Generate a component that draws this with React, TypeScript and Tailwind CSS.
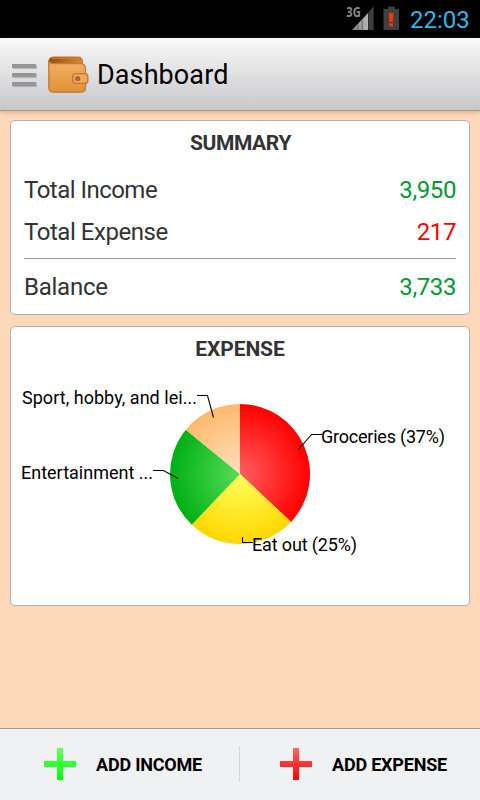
import React from "react";

const CX = 240;
const CY = 94;
const R = 70;

function slicePath(from: number, to: number): string {
  const point = (deg: number) => {
    const a = (deg * Math.PI) / 180;
    return `${(CX + R * Math.sin(a)).toFixed(2)} ${(CY - R * Math.cos(a)).toFixed(2)}`;
  };
  return `M${CX} ${CY}L${point(from)}A${R} ${R} 0 0 1 ${point(to)}Z`;
}

const slices = [
  { id: "groceries", from: 0, to: 133.2, inner: "#ff5e5e", outer: "#ff0000" },
  { id: "eatout", from: 133.2, to: 223.5, inner: "#ffff5e", outer: "#ffd700" },
  { id: "fun", from: 223.5, to: 309.3, inner: "#57dc57", outer: "#00b014" },
  { id: "sport", from: 309.3, to: 360, inner: "#ffdfbe", outer: "#ffb96e" },
];

const labels = [
  { text: "Sport, hobby, and lei...", x: 22, y: 24, width: 175, line: "197,15.5 207.5,15.5 213.5,37.5" },
  { text: "Entertainment ...", x: 21, y: 99, width: 132, line: "153,90.5 163.5,90.5 178,98.5" },
  { text: "Groceries (37%)", x: 321, y: 63, width: 124, line: "298.5,69.5 311.5,54.5 322,54.5" },
  { text: "Eat out (25%)", x: 252, y: 171, width: 105, line: "242.5,157 242.5,162.5 253,162.5" },
];

function StatusBar() {
  return (
    <div className="flex h-[38px] items-center justify-end bg-black pr-[9px]">
      <svg width="64" height="38" viewBox="340 0 64 38" className="mr-[6px]">
        <defs>
          <linearGradient id="signal" x1="0" x2="1">
            <stop offset="0" stopColor="#808080" />
            <stop offset="1" stopColor="#b4b4b4" />
          </linearGradient>
        </defs>
        <path d="M352 30L368 13V30Z" fill="url(#signal)" />
        <path d="M368.3 12.3L373.7 6.3V30H368.3Z" fill="#3d3d3d" />
        <path d="M358 25V30M362.2 20V30" stroke="#5a5a5a" strokeWidth="0.9" />
        <text x="346.3" y="17" fill="#8b8b8b" fontSize="14" fontWeight="700" textLength="14.4" lengthAdjust="spacingAndGlyphs" className="font-['Open_Sans',sans-serif]">3G</text>
        <path d="M388 6.5H395V9H399V30H383.5V9H388Z" fill="#404040" />
        <path d="M388.8 13H393.4L392.8 22H389.4Z" fill="#ff3300" />
        <rect x="389.2" y="23.3" width="3.8" height="3.2" fill="#ff3300" />
      </svg>
      <span className="w-[61px] whitespace-nowrap pt-px text-[24px] leading-[38px] text-[#33b5e5]">22:03</span>
    </div>
  );
}

function Wallet() {
  return (
    <svg width="42" height="38" viewBox="0 0 42 38" className="mt-0.5 ml-3">
      <defs>
        <linearGradient id="leather" x1="0" y1="0" x2="0" y2="1">
          <stop offset="0" stopColor="#f6b064" />
          <stop offset="1" stopColor="#de9238" />
        </linearGradient>
        <linearGradient id="lip" x1="0" y1="0" x2="1" y2="0.35">
          <stop offset="0" stopColor="#874509" />
          <stop offset="0.55" stopColor="#b8691b" />
          <stop offset="1" stopColor="#d9862d" />
        </linearGradient>
      </defs>
      <path d="M0.8 5Q1.2 1 5 1H30Q34.5 1 34.5 6V10H0.8Z" fill="url(#lip)" stroke="#bd7427" strokeWidth="1" />
      <path d="M0.8 5.5Q2 7.6 5 7.6H33Q37.5 8 37.5 13V31Q37.5 36.2 32.5 36.2H5.5Q0.8 36.2 0.8 31Z" fill="url(#leather)" stroke="#bf7b37" strokeWidth="1.3" />
      <path d="M4 2.2H31" stroke="#d28636" strokeWidth="1" />
      <rect x="24.8" y="17.6" width="15" height="9.8" rx="3" fill="#f2a955" stroke="#bf783a" strokeWidth="1.4" />
      <circle cx="29.7" cy="22.5" r="2.6" fill="#a96534" />
    </svg>
  );
}

function Header() {
  return (
    <header className="relative z-10 flex h-[73px] items-center border-b border-[#b5997f] bg-linear-to-b from-[#f9f9f9] to-[#c8c8cb] pl-3 shadow-[0_1px_5px_rgba(120,80,50,0.35)]">
      <div className="mt-0.5 flex w-6 flex-col gap-[5px]">
        <div className="h-1 bg-[#969696] shadow-[1px_1px_1px_rgba(0,0,0,0.2)]" />
        <div className="h-1 bg-[#969696] shadow-[1px_1px_1px_rgba(0,0,0,0.2)]" />
        <div className="h-1 bg-[#969696] shadow-[1px_1px_1px_rgba(0,0,0,0.2)]" />
      </div>
      <Wallet />
      <h1 className="mt-0.5 ml-[7px] whitespace-nowrap text-[27px] leading-8 tracking-[0.1px] text-black">Dashboard</h1>
    </header>
  );
}

function Row({ label, value, tone, tracking }: { label: string; value: string; tone: string; tracking: string }) {
  return (
    <div className="flex h-[42px] items-center justify-between text-[24px] leading-[42px]">
      <span className={tracking}>{label}</span>
      <span className={`tracking-[-0.4px] ${tone}`}>{value}</span>
    </div>
  );
}

function Plus({ id, light, full }: { id: string; light: string; full: string }) {
  return (
    <svg width="32" height="32" viewBox="0 0 32 32" className="-mt-0.5">
      <defs>
        <linearGradient id={id} x1="0" y1="0" x2="0" y2="1">
          <stop offset="0" stopColor={light} />
          <stop offset="1" stopColor={full} />
        </linearGradient>
      </defs>
      <path d="M13 0H19V13H32V19H19V32H13V19H0V13H13Z" fill={`url(#${id})`} />
    </svg>
  );
}

export default function App() {
  return (
    <div className="flex h-[800px] w-[480px] flex-col overflow-hidden bg-[#fdd9b9] font-['Roboto',sans-serif] text-[#333]">
      <StatusBar />
      <Header />
      <main className="flex flex-1 flex-col gap-[11px] px-2.5 pt-[9px]">
        <section className="h-[195px] rounded-[5px] border border-[#aeb0b3] bg-white px-[13px]">
          <h2 className="pt-[6px] pl-px text-center text-[21px] leading-8 font-bold tracking-[-0.4px]">SUMMARY</h2>
          <div className="pt-[10px]">
            <Row label="Total Income" value="3,950" tone="text-[#009933]" tracking="tracking-[-0.52px]" />
            <Row label="Total Expense" value="217" tone="text-[#ff0000]" tracking="tracking-[-0.45px]" />
          </div>
          <div className="mt-[5px] mb-[7px] h-px bg-[#969696]" />
          <Row label="Balance" value="3,733" tone="text-[#009933]" tracking="tracking-[-0.25px]" />
        </section>
        <section className="h-[280px] rounded-[5px] border border-[#aeb0b3] bg-white">
          <h2 className="pt-[6px] text-center text-[21px] leading-8 font-bold tracking-[-0.1px]">EXPENSE</h2>
          <svg width="458" height="200" viewBox="11 0 458 200" className="mt-[15px] block">
            <defs>
              {slices.map((s) => (
                <radialGradient key={s.id} id={s.id} gradientUnits="userSpaceOnUse" cx={CX} cy={CY} r={R}>
                  <stop offset="0" stopColor={s.inner} />
                  <stop offset="1" stopColor={s.outer} />
                </radialGradient>
              ))}
            </defs>
            {slices.map((s) => (
              <path key={s.id} d={slicePath(s.from, s.to)} fill={`url(#${s.id})`} />
            ))}
            {labels.map((l) => (
              <g key={l.text}>
                <polyline points={l.line} fill="none" stroke="#000" strokeWidth="1.1" />
                <text x={l.x} y={l.y} fontSize="18" fill="#000" textLength={l.width}>{l.text}</text>
              </g>
            ))}
          </svg>
        </section>
      </main>
      <footer className="flex h-[72px] border-t border-[#999a9d] bg-[#f0f1f3] text-[18px] font-bold tracking-[-0.2px] text-black">
        <button className="flex w-[239px] items-center gap-5 pl-11">
          <Plus id="plus-income" light="#66ff66" full="#00ff00" />
          <span className="whitespace-nowrap">ADD INCOME</span>
        </button>
        <div className="mt-[17px] h-9 w-px bg-[#d5d6d8]" />
        <button className="flex w-[240px] items-center gap-5 pl-10">
          <Plus id="plus-expense" light="#ff6666" full="#ff0000" />
          <span className="whitespace-nowrap">ADD EXPENSE</span>
        </button>
      </footer>
    </div>
  );
}
